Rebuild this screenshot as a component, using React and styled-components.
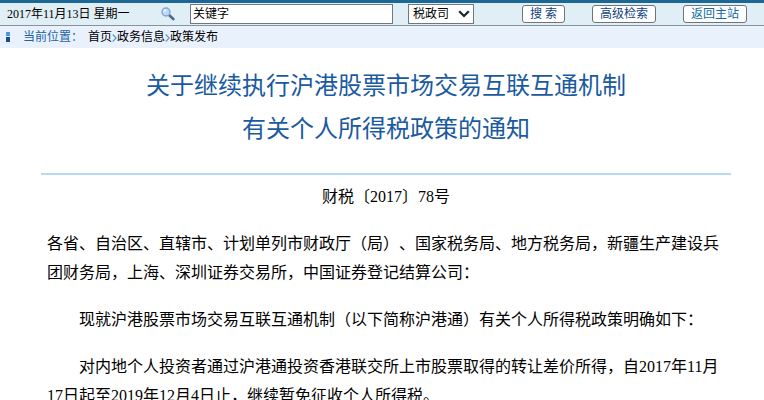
import React, { useState } from 'react';
import styled, { createGlobalStyle } from 'styled-components';

const GlobalStyle = createGlobalStyle`
	* {
		box-sizing: border-box;
	}

	body {
		margin: 0;
		background: #fff;
		color: #000;
		font-family: 'Liberation Serif', 'Noto Sans CJK SC', sans-serif;
		font-size: 12px;
		text-spacing-trim: space-all;
		text-autospace: no-autospace;
	}
`;

const Toolbar = styled.form`
	display: flex;
	align-items: center;
	height: 26px;
	padding: 0 17px 0 7px;
	border-top: 3px solid #1c6793;
	border-bottom: 1px solid #87939b;
	background: #e0eff6;
`;

const Today = styled.time`
	min-width: 154px;
	line-height: 20px;
	white-space: nowrap;
`;

const SearchIcon = styled.svg`
	flex: none;
	width: 14px;
	height: 14px;
	margin-right: 15px;
`;

const Keyword = styled.input`
	flex: 1;
	min-width: 60px;
	height: 20px;
	padding: 0 2px 2px;
	border: 1px solid #71787d;
	background: #fff;
	color: #000;
	font-family: inherit;
	font-size: 12px;
	line-height: 16px;
	outline: none;
`;

const SelectBox = styled.div`
	display: grid;
	align-items: center;
	width: 66px;
	margin: 0 21px 0 15px;

	> * {
		grid-area: 1 / 1;
	}
`;

const Department = styled.select`
	appearance: none;
	width: 100%;
	height: 20px;
	padding: 0 4px;
	border: 1px solid #71787d;
	border-radius: 0;
	background: #fff;
	color: #000;
	font-family: inherit;
	font-size: 12px;
	line-height: 18px;
`;

const Chevron = styled.svg`
	justify-self: end;
	width: 12px;
	height: 8px;
	margin-right: 4px;
	pointer-events: none;
`;

const ToolButton = styled.button`
	height: 18px;
	min-width: 42px;
	margin-left: 27px;
	padding: 0 7px;
	border: 1px solid #6f7479;
	border-radius: 3px;
	background: #fff;
	color: ${(props) => props.$color || '#103f80'};
	font-family: inherit;
	font-size: 12px;
	line-height: 16px;
	white-space: pre;
	cursor: pointer;
`;

const Breadcrumb = styled.nav`
	display: flex;
	align-items: center;
	padding: 1px 0 0 6px;
	background: #e9f2fc;
	line-height: 21px;
`;

const Marker = styled.svg`
	width: 4px;
	height: 12px;
	margin-right: 13px;
`;

const Location = styled.span`
	color: #1c62a8;
	margin-right: 5px;
`;

const Crumb = styled.a`
	color: #000;
	text-decoration: none;
`;

const Separator = styled.svg`
	width: 5px;
	height: 8px;
`;

const Article = styled.article`
	padding: 17px 33px 20px 41px;
`;

const Title = styled.h1`
	margin: 0;
	padding-bottom: 22px;
	border-bottom: 2px solid #b9d9f2;
	color: #1a5a9f;
	font-size: 24px;
	font-weight: 400;
	line-height: 43px;
	text-align: center;
`;

const DocNumber = styled.p`
	margin: 7px 0 18px;
	font-size: 16px;
	line-height: 29px;
	text-align: center;
`;

const Content = styled.div`
	padding: 0 11px 0 6px;
`;

const Paragraph = styled.p`
	margin: 0 0 18px;
	font-size: 16px;
	line-height: 29px;
	text-indent: ${(props) => (props.$indent ? '2em' : '0')};
`;

const crumbs = ['首页', '政务信息', '政策发布'];

const paragraphs = [
	{
		text: '各省、自治区、直辖市、计划单列市财政厅（局）、国家税务局、地方税务局，新疆生产建设兵团财务局，上海、深圳证券交易所，中国证券登记结算公司：',
	},
	{
		indent: true,
		text: '现就沪港股票市场交易互联互通机制（以下简称沪港通）有关个人所得税政策明确如下：',
	},
	{
		indent: true,
		text: '对内地个人投资者通过沪港通投资香港联交所上市股票取得的转让差价所得，自2017年11月17日起至2019年12月4日止，继续暂免征收个人所得税。',
	},
];

export default function App() {
	const [keyword, setKeyword] = useState('关键字');

	return (
		<>
			<GlobalStyle />
			<Toolbar onSubmit={(e) => e.preventDefault()}>
				<Today dateTime="2017-11-13">2017年11月13日 星期一</Today>
				<SearchIcon viewBox="0 0 14 14" aria-hidden="true">
					<path d="M8.3 8.3 12.3 12" stroke="#56658f" strokeWidth="2.6" strokeLinecap="round" />
					<circle cx="5" cy="5" r="4" fill="#b4dcfa" stroke="#86a5c9" strokeWidth="1.4" />
					<path d="M3 5a2.2 2.2 0 0 1 2.2-2.2" fill="none" stroke="#fff" strokeWidth="1.2" />
				</SearchIcon>
				<Keyword
					aria-label="关键字"
					value={keyword}
					onChange={(e) => setKeyword(e.target.value)}
				/>
				<SelectBox>
					<Department aria-label="栏目">
						<option>税政司</option>
					</Department>
					<Chevron viewBox="0 0 12 8" aria-hidden="true">
						<path d="M1.2 1.2 6 6 10.8 1.2" fill="none" stroke="#1d2430" strokeWidth="2.2" />
					</Chevron>
				</SelectBox>
				<ToolButton type="submit">搜 索</ToolButton>
				<ToolButton type="button">高级检索</ToolButton>
				<ToolButton type="button" $color="#0f6aa5">
					返回主站
				</ToolButton>
			</Toolbar>
			<Breadcrumb>
				<Marker viewBox="0 0 4 12" aria-hidden="true">
					<rect width="4" height="4" fill="#4d9ad6" />
					<rect y="5" width="4" height="5" fill="#174f8e" />
				</Marker>
				<Location>当前位置：</Location>
				{crumbs.map((name, i) => (
					<React.Fragment key={name}>
						{i > 0 && (
							<Separator viewBox="0 0 5 8" aria-hidden="true">
								<path d="M.7.5 4.2 4 .7 7.5" fill="none" stroke="#5d97cb" strokeWidth="1.2" />
							</Separator>
						)}
						<Crumb href="#">{name}</Crumb>
					</React.Fragment>
				))}
			</Breadcrumb>
			<Article>
				<Title>
					关于继续执行沪港股票市场交易互联互通机制
					<br />
					有关个人所得税政策的通知
				</Title>
				<DocNumber>财税〔2017〕78号</DocNumber>
				<Content>
					{paragraphs.map((p) => (
						<Paragraph key={p.text} $indent={p.indent}>
							{p.text}
						</Paragraph>
					))}
				</Content>
			</Article>
		</>
	);
}
